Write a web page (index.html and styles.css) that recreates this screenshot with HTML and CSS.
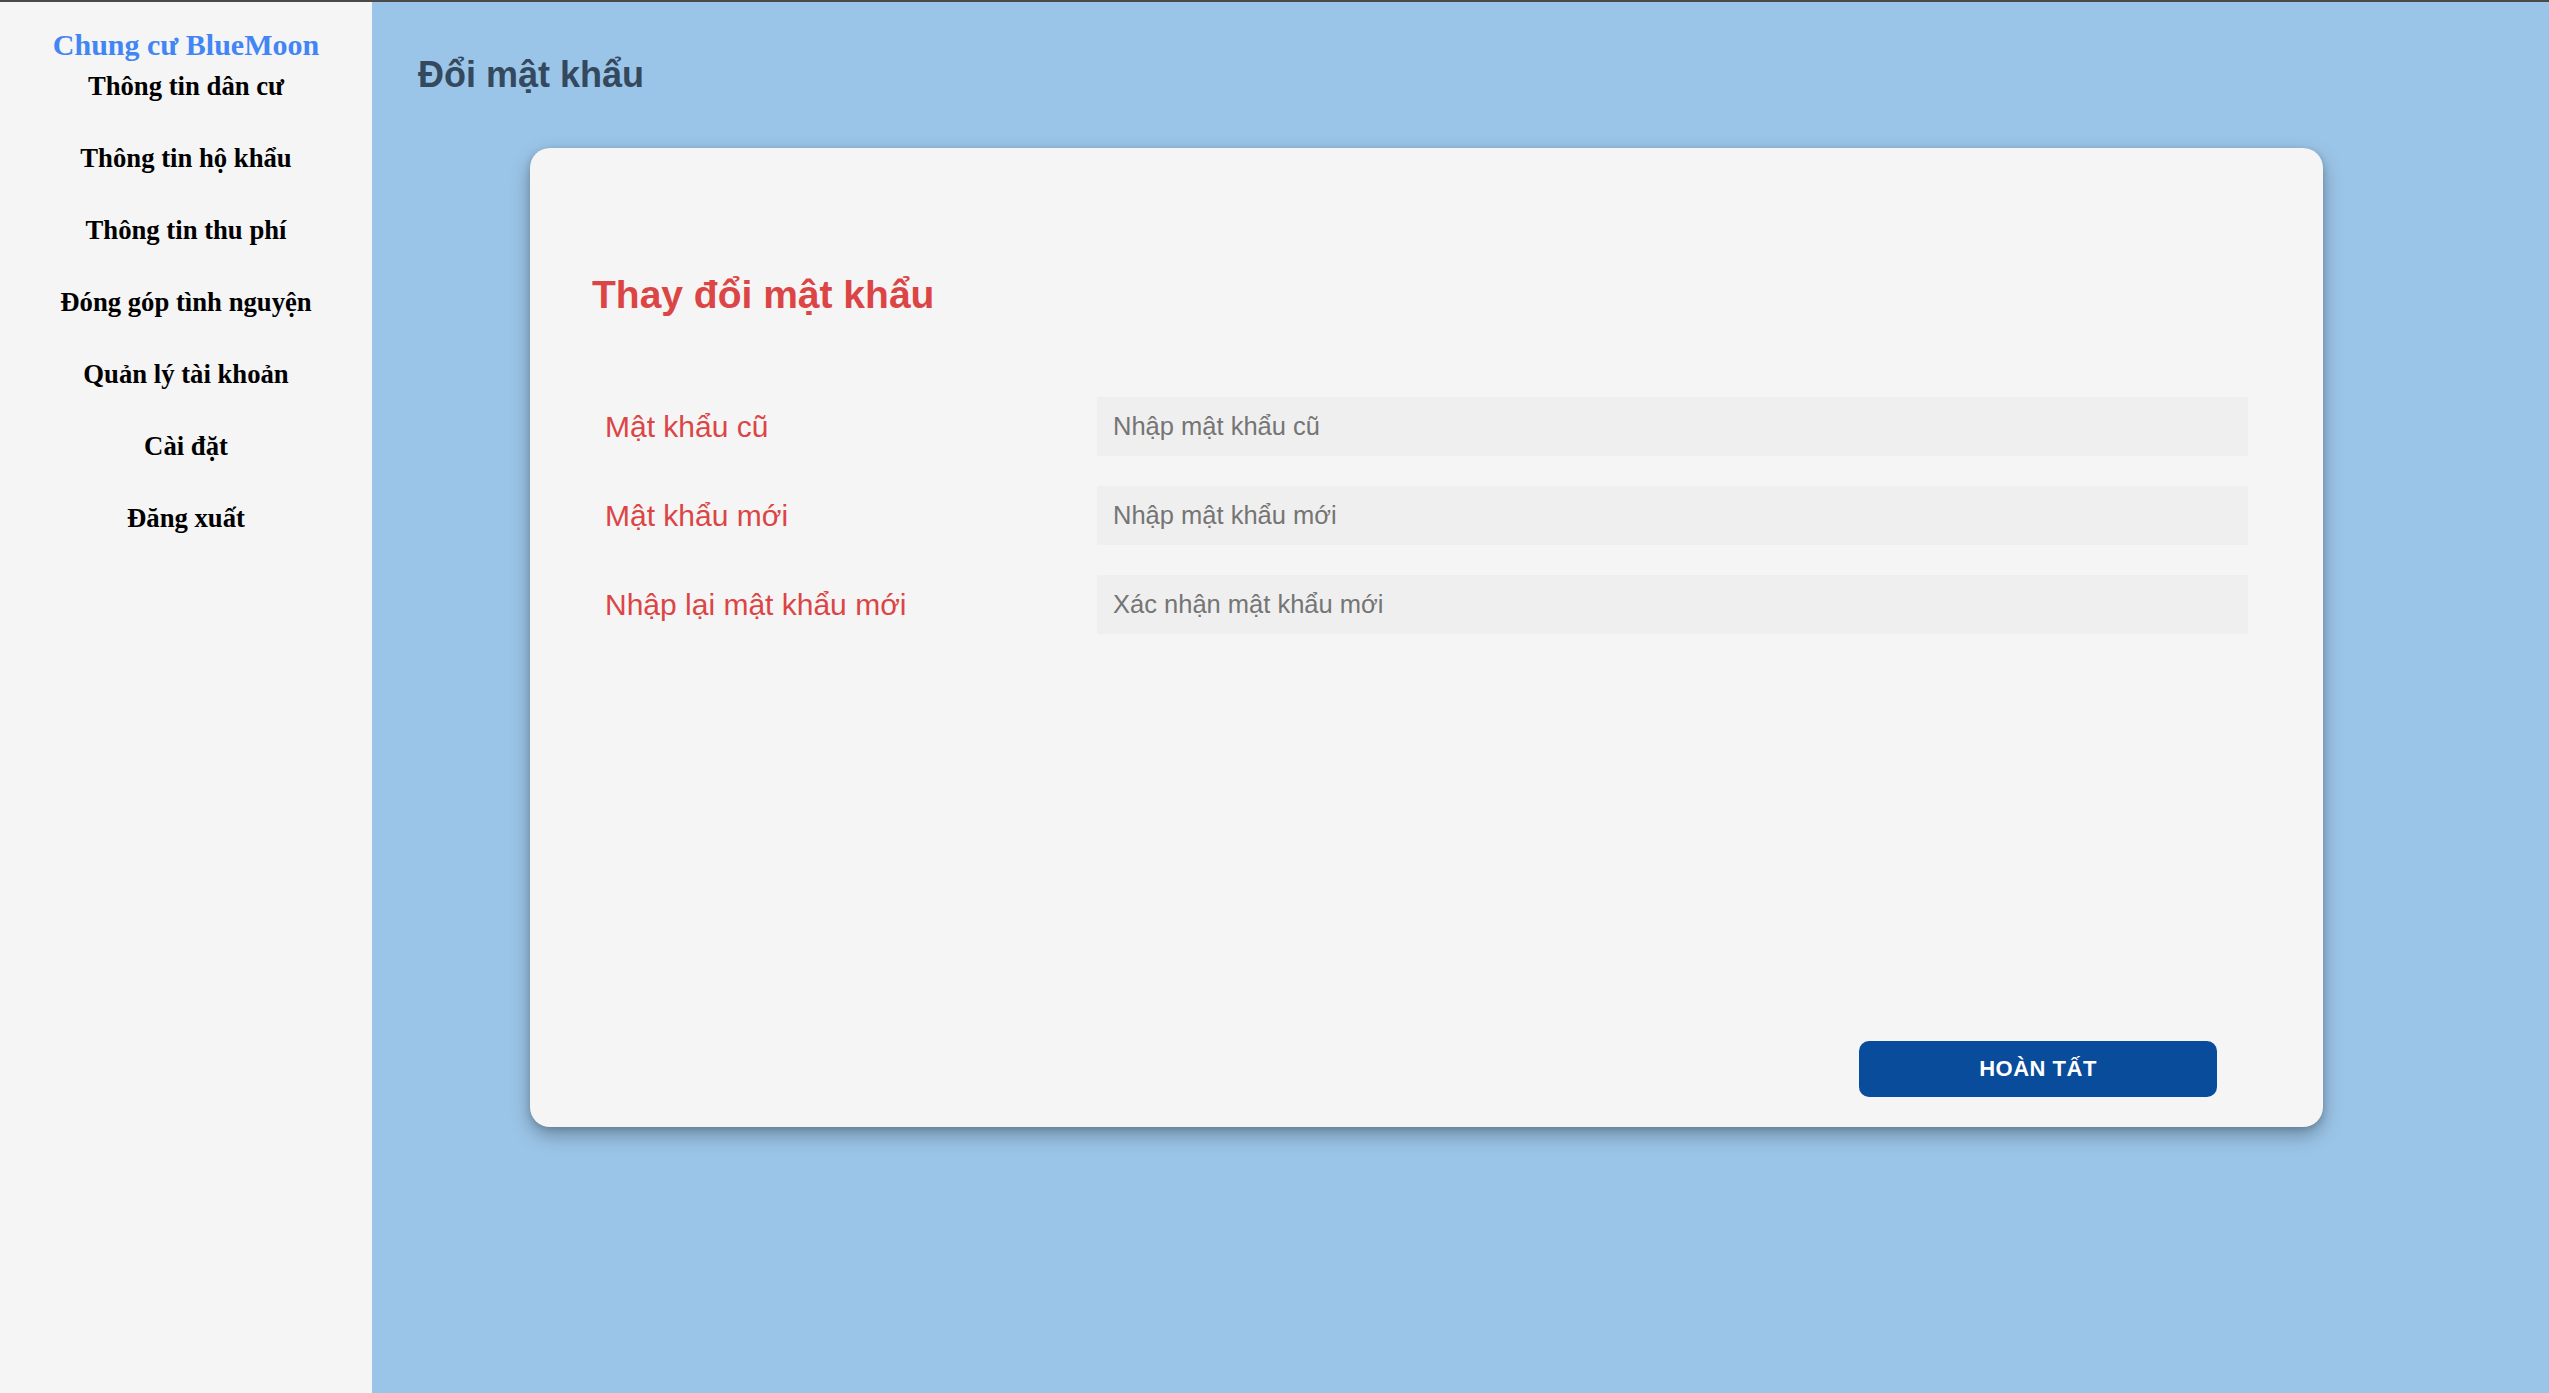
FILE: index.html
```html
<!DOCTYPE html>
<html lang="vi">
<head>
<meta charset="utf-8">
<title>Đổi mật khẩu</title>
<link rel="stylesheet" href="styles.css">
</head>
<body>
<div class="app">
  <aside class="sidebar">
    <div class="brand">Chung cư BlueMoon</div>
    <nav class="menu">
      <a class="menu-item" href="#">Thông tin dân cư</a>
      <a class="menu-item" href="#">Thông tin hộ khẩu</a>
      <a class="menu-item" href="#">Thông tin thu phí</a>
      <a class="menu-item" href="#">Đóng góp tình nguyện</a>
      <a class="menu-item" href="#">Quản lý tài khoản</a>
      <a class="menu-item" href="#">Cài đặt</a>
      <a class="menu-item" href="#">Đăng xuất</a>
    </nav>
  </aside>
  <main class="main">
    <h1 class="page-title">Đổi mật khẩu</h1>
    <section class="card">
      <h2 class="card-title">Thay đổi mật khẩu</h2>
      <form class="form">
        <label class="form-label" for="old">Mật khẩu cũ</label>
        <input class="form-input" id="old" type="password" placeholder="Nhập mật khẩu cũ">
        <label class="form-label" for="new">Mật khẩu mới</label>
        <input class="form-input" id="new" type="password" placeholder="Nhập mật khẩu mới">
        <label class="form-label" for="confirm">Nhập lại mật khẩu mới</label>
        <input class="form-input" id="confirm" type="password" placeholder="Xác nhận mật khẩu mới">
      </form>
      <div class="actions">
        <button class="btn-submit" type="button">HOÀN TẤT</button>
      </div>
    </section>
  </main>
</div>
</body>
</html>
```

FILE: styles.css
```css
* {
  box-sizing: border-box;
}

html, body {
  margin: 0;
  padding: 0;
  height: 100%;
}

body {
  font-family: "Liberation Sans", Arial, sans-serif;
  background: #9bc5e8;
}

.app {
  display: flex;
  height: 1393px;
  border-top: 2px solid #4a4a4a;
}

.sidebar {
  width: 372px;
  flex: 0 0 372px;
  background: #f5f5f5;
  padding-top: 26px;
  text-align: center;
  font-family: "Liberation Serif", "Times New Roman", serif;
}

.brand {
  font-size: 30px;
  line-height: 34px;
  font-weight: bold;
  color: #4285f4;
}

.menu {
  display: flex;
  flex-direction: column;
  gap: 41px;
  margin-top: 9px;
}

.menu-item {
  display: block;
  font-size: 26.7px;
  line-height: 31px;
  font-weight: bold;
  color: #000;
  text-decoration: none;
}

.main {
  flex: 1;
  padding: 52px 0 0 46px;
  background: #9bc5e8;
}

.page-title {
  margin: 0;
  font-size: 36px;
  line-height: 42px;
  font-weight: bold;
  color: #34495e;
}

.card {
  margin: 52px 0 0 112px;
  width: 1793px;
  height: 979px;
  background: #f5f5f5;
  border-radius: 20px;
  box-shadow: 0 8px 20px rgba(0, 0, 0, 0.3), 0 2px 6px rgba(0, 0, 0, 0.15);
  padding: 0 75px 30px 62px;
  display: flex;
  flex-direction: column;
}

.card-title {
  margin: 124px 0 0 0;
  font-size: 39px;
  line-height: 45px;
  font-weight: bold;
  color: #dc4545;
}

.form {
  margin-top: 80px;
  display: grid;
  grid-template-columns: 505px 1fr;
  grid-auto-rows: 59px;
  row-gap: 30px;
  align-items: center;
}

.form-label {
  padding-left: 13px;
  font-size: 30px;
  color: #dc4545;
}

.form-input {
  height: 59px;
  width: 100%;
  border: none;
  outline: none;
  background: #efefef;
  padding: 0 16px;
  font-family: "Liberation Sans", Arial, sans-serif;
  font-size: 25.5px;
  color: #333;
}

.form-input::placeholder {
  color: #757575;
}

.actions {
  margin-top: auto;
  display: flex;
  justify-content: flex-end;
  padding-right: 31px;
}

.btn-submit {
  width: 358px;
  height: 56px;
  border: none;
  border-radius: 10px;
  background: #094c9b;
  color: #fff;
  font-family: "Liberation Sans", Arial, sans-serif;
  font-size: 22px;
  font-weight: bold;
  letter-spacing: 0.5px;
  cursor: pointer;
}
```
